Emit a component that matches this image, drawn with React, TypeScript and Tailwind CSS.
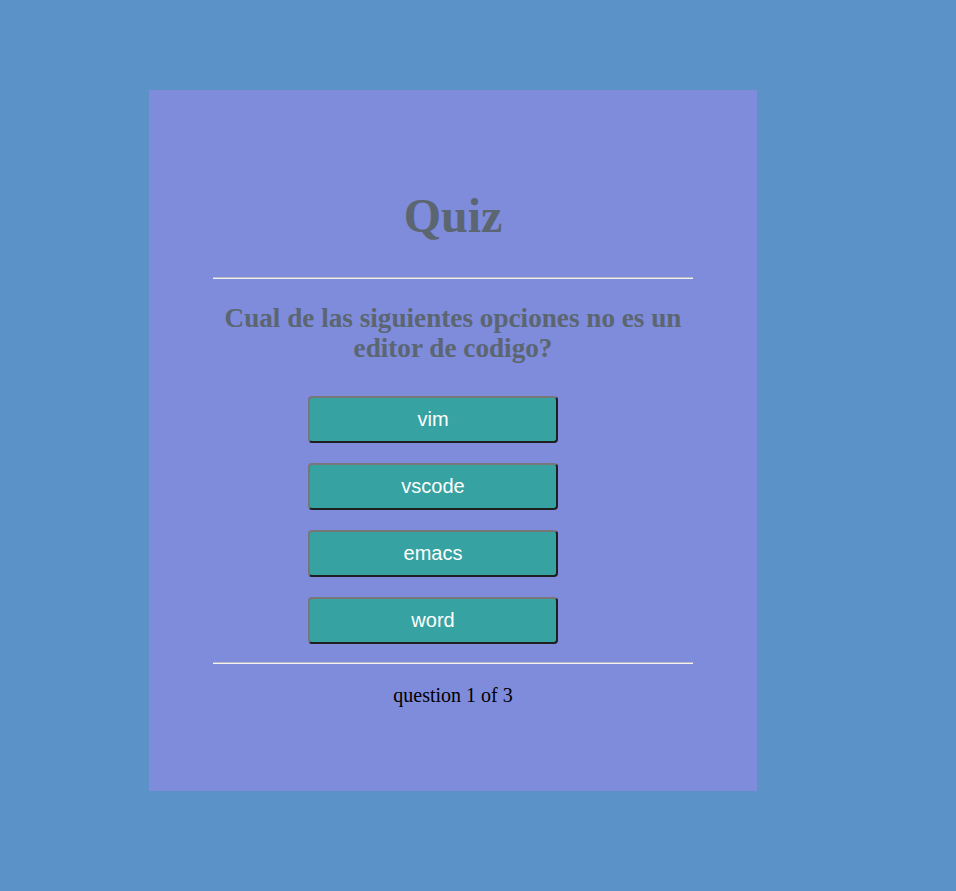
export default function App() {
  const options = ["vim", "vscode", "emacs", "word"];
  return (
    <div className="min-h-screen w-full bg-[#5b93c9] pt-[90px] pl-[149px] pb-[100px]" style={{ minHeight: 891 }}>
      <div className="w-[608px] h-[701px] bg-[#7f8bdb] px-[64px] pt-[102px]">
        <h1 className="text-center text-[48px] leading-[48px] font-bold text-[#5b6670] font-['Liberation_Serif',serif]">
          Quiz
        </h1>
        <div className="mt-[37px] h-[2px] border-t border-t-[#b9b9c9] border-b border-b-[#f2f2f2]" />
        <h2 className="mt-[24px] text-center text-[27.2px] leading-[30px] font-bold text-[#5b6670] font-['Liberation_Serif',serif]">
          Cual de las siguientes opciones no es un editor de codigo?
        </h2>
        <div className="mt-[33px] ml-[95px] flex flex-col gap-[20px]">
          {options.map((o) => (
            <button
              key={o}
              className="w-[250px] h-[47px] pb-[2px] rounded-[4px] border-2 border-t-[#777777] border-l-[#777777] border-r-[#1f1f1f] border-b-[#1f1f1f] bg-[#37a2a2] text-white text-[20px] font-['Liberation_Sans',Arial,sans-serif] flex items-center justify-center"
            >
              {o}
            </button>
          ))}
        </div>
        <div className="mt-[18px] h-[2px] border-t border-t-[#b9b9c9] border-b border-b-[#f2f2f2]" />
        <p className="mt-[20px] text-center text-[20px] leading-[23px] text-black font-['Liberation_Serif',serif]">
          question 1 of 3
        </p>
      </div>
    </div>
  );
}
